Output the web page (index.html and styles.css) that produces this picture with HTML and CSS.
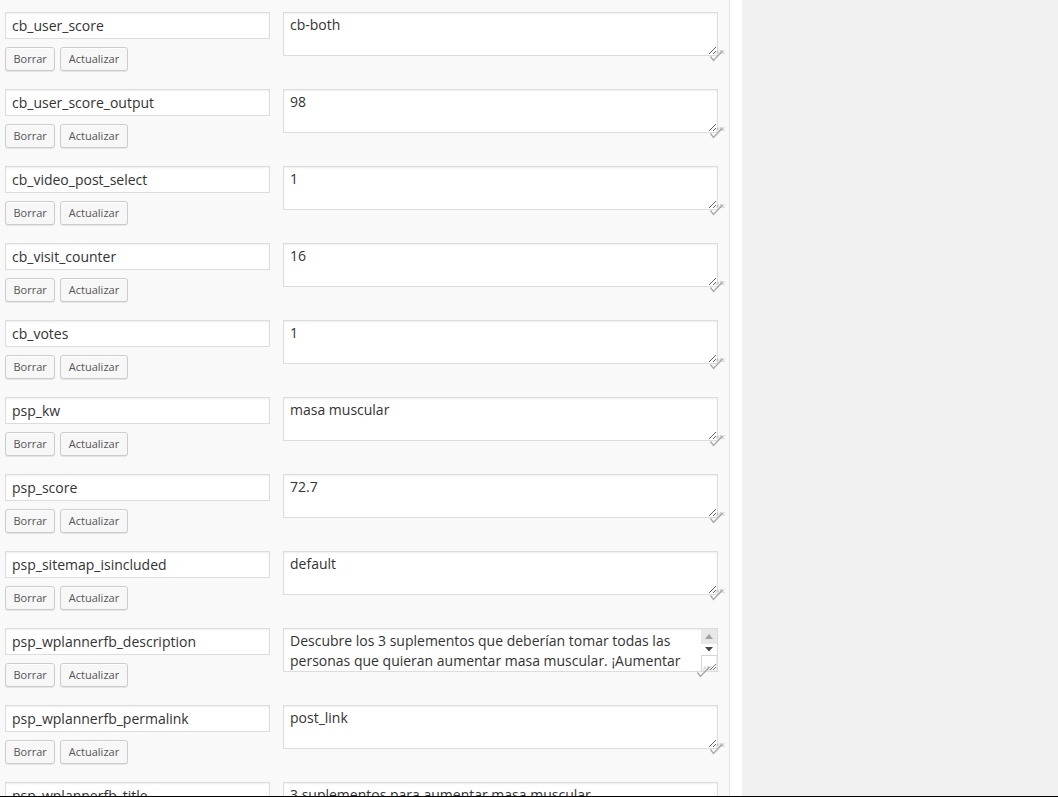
FILE: index.html
```html
<!DOCTYPE html>
<html lang="es">
<head>
<meta charset="utf-8">
<title>Campos personalizados</title>
<link rel="stylesheet" href="styles.css">
</head>
<body>
<div class="layout">
  <div class="panel">
    <div class="row">
      <div class="keycol">
        <input class="key" type="text" value="cb_user_score">
        <div class="btns"><button class="btn">Borrar</button><button class="btn">Actualizar</button></div>
      </div>
      <div class="valcol"><textarea class="val" rows="2">cb-both</textarea><span class="spell"><svg width="16" height="16" viewBox="0 0 16 16"><text x="7" y="7" class="abc">ABC</text><path d="M1.5 9.5 L4.5 13.5 L13.5 4" fill="none" stroke="#a8a8a8" stroke-width="1.3"/></svg></span></div>
    </div>
    <div class="row">
      <div class="keycol">
        <input class="key" type="text" value="cb_user_score_output">
        <div class="btns"><button class="btn">Borrar</button><button class="btn">Actualizar</button></div>
      </div>
      <div class="valcol"><textarea class="val" rows="2">98</textarea><span class="spell"><svg width="16" height="16" viewBox="0 0 16 16"><text x="7" y="7" class="abc">ABC</text><path d="M1.5 9.5 L4.5 13.5 L13.5 4" fill="none" stroke="#a8a8a8" stroke-width="1.3"/></svg></span></div>
    </div>
    <div class="row">
      <div class="keycol">
        <input class="key" type="text" value="cb_video_post_select">
        <div class="btns"><button class="btn">Borrar</button><button class="btn">Actualizar</button></div>
      </div>
      <div class="valcol"><textarea class="val" rows="2">1</textarea><span class="spell"><svg width="16" height="16" viewBox="0 0 16 16"><text x="7" y="7" class="abc">ABC</text><path d="M1.5 9.5 L4.5 13.5 L13.5 4" fill="none" stroke="#a8a8a8" stroke-width="1.3"/></svg></span></div>
    </div>
    <div class="row">
      <div class="keycol">
        <input class="key" type="text" value="cb_visit_counter">
        <div class="btns"><button class="btn">Borrar</button><button class="btn">Actualizar</button></div>
      </div>
      <div class="valcol"><textarea class="val" rows="2">16</textarea><span class="spell"><svg width="16" height="16" viewBox="0 0 16 16"><text x="7" y="7" class="abc">ABC</text><path d="M1.5 9.5 L4.5 13.5 L13.5 4" fill="none" stroke="#a8a8a8" stroke-width="1.3"/></svg></span></div>
    </div>
    <div class="row">
      <div class="keycol">
        <input class="key" type="text" value="cb_votes">
        <div class="btns"><button class="btn">Borrar</button><button class="btn">Actualizar</button></div>
      </div>
      <div class="valcol"><textarea class="val" rows="2">1</textarea><span class="spell"><svg width="16" height="16" viewBox="0 0 16 16"><text x="7" y="7" class="abc">ABC</text><path d="M1.5 9.5 L4.5 13.5 L13.5 4" fill="none" stroke="#a8a8a8" stroke-width="1.3"/></svg></span></div>
    </div>
    <div class="row">
      <div class="keycol">
        <input class="key" type="text" value="psp_kw">
        <div class="btns"><button class="btn">Borrar</button><button class="btn">Actualizar</button></div>
      </div>
      <div class="valcol"><textarea class="val" rows="2">masa muscular</textarea><span class="spell"><svg width="16" height="16" viewBox="0 0 16 16"><text x="7" y="7" class="abc">ABC</text><path d="M1.5 9.5 L4.5 13.5 L13.5 4" fill="none" stroke="#a8a8a8" stroke-width="1.3"/></svg></span></div>
    </div>
    <div class="row">
      <div class="keycol">
        <input class="key" type="text" value="psp_score">
        <div class="btns"><button class="btn">Borrar</button><button class="btn">Actualizar</button></div>
      </div>
      <div class="valcol"><textarea class="val" rows="2">72.7</textarea><span class="spell"><svg width="16" height="16" viewBox="0 0 16 16"><text x="7" y="7" class="abc">ABC</text><path d="M1.5 9.5 L4.5 13.5 L13.5 4" fill="none" stroke="#a8a8a8" stroke-width="1.3"/></svg></span></div>
    </div>
    <div class="row">
      <div class="keycol">
        <input class="key" type="text" value="psp_sitemap_isincluded">
        <div class="btns"><button class="btn">Borrar</button><button class="btn">Actualizar</button></div>
      </div>
      <div class="valcol"><textarea class="val" rows="2">default</textarea><span class="spell"><svg width="16" height="16" viewBox="0 0 16 16"><text x="7" y="7" class="abc">ABC</text><path d="M1.5 9.5 L4.5 13.5 L13.5 4" fill="none" stroke="#a8a8a8" stroke-width="1.3"/></svg></span></div>
    </div>
    <div class="row">
      <div class="keycol">
        <input class="key" type="text" value="psp_wplannerfb_description">
        <div class="btns"><button class="btn">Borrar</button><button class="btn">Actualizar</button></div>
      </div>
      <div class="valcol"><textarea class="val" rows="2">Descubre los 3 suplementos que deberían tomar todas las personas que quieran aumentar masa muscular. ¡Aumentar masa muscular nunca fue tan fácil con estos suplementos!</textarea><span class="vscroll"><svg width="16" height="42" viewBox="0 0 16 42"><rect x="0" y="0" width="16" height="15" fill="#e8e8e8"/><path d="M4 10 L8 5 L12 10 Z" fill="#a3a3a3"/><path d="M4 18 L12 18 L8 22.5 Z" fill="#474747"/><rect x="0.5" y="26.5" width="15.5" height="15.5" fill="#fff" stroke="#d6d6d6"/><path d="M9 41 L15 35 M12 41 L15 38" stroke="#7a7a7a" stroke-width="1"/></svg></span><span class="spell desc"><svg width="16" height="16" viewBox="0 0 16 16"><text x="7" y="7" class="abc">ABC</text><path d="M1.5 9.5 L4.5 13.5 L13.5 4" fill="none" stroke="#a8a8a8" stroke-width="1.3"/></svg></span></div>
    </div>
    <div class="row">
      <div class="keycol">
        <input class="key" type="text" value="psp_wplannerfb_permalink">
        <div class="btns"><button class="btn">Borrar</button><button class="btn">Actualizar</button></div>
      </div>
      <div class="valcol"><textarea class="val" rows="2">post_link</textarea><span class="spell"><svg width="16" height="16" viewBox="0 0 16 16"><text x="7" y="7" class="abc">ABC</text><path d="M1.5 9.5 L4.5 13.5 L13.5 4" fill="none" stroke="#a8a8a8" stroke-width="1.3"/></svg></span></div>
    </div>
    <div class="row">
      <div class="keycol">
        <input class="key" type="text" value="psp_wplannerfb_title">
        <div class="btns"><button class="btn">Borrar</button><button class="btn">Actualizar</button></div>
      </div>
      <div class="valcol"><textarea class="val" rows="2">3 suplementos para aumentar masa muscular</textarea></div>
    </div>
  </div>
  <div class="strip"></div>
  <div class="side"></div>
</div>
<div class="bottomline"></div>
</body>
</html>
```

FILE: styles.css
```css
html, body {
  margin: 0;
  padding: 0;
  height: 100%;
  overflow: hidden;
  background: #f1f1f1;
  font-family: "Open Sans", "Liberation Sans", sans-serif;
}
.layout {
  display: flex;
  align-items: stretch;
  min-height: 100vh;
}
.panel {
  width: 729px;
  flex: 0 0 729px;
  background: #f9f9f9;
  border-right: 1px solid #e5e5e5;
  padding-top: 12px;
  box-sizing: content-box;
}
.strip {
  flex: 0 0 12px;
  background: #fff;
}
.side {
  flex: 1;
  background: #f1f1f1;
}
.row {
  display: flex;
  align-items: flex-start;
  height: 77px;
  padding-left: 5px;
}
.keycol {
  width: 265px;
  display: flex;
  flex-direction: column;
  gap: 8px;
}
.key {
  box-sizing: border-box;
  width: 265px;
  height: 27px;
  margin: 0;
  padding: 2px 6px;
  border: 1px solid #dddddd;
  background: #fff;
  box-shadow: inset 0 1px 2px rgba(0,0,0,0.07);
  font-family: "Open Sans", "Liberation Sans", sans-serif;
  font-size: 14px;
  color: #333;
  outline: none;
}
.btns {
  display: flex;
  gap: 5px;
}
.btn {
  box-sizing: border-box;
  height: 24px;
  margin: 0;
  padding: 0 7.5px 1px;
  border: 1px solid #cccccc;
  border-radius: 3px;
  background: #f7f7f7;
  box-shadow: inset 0 1px 0 #fff, 0 1px 0 rgba(0,0,0,0.08);
  font-family: "Open Sans", "Liberation Sans", sans-serif;
  font-size: 11px;
  color: #555;
  line-height: 20px;
}
.valcol {
  position: relative;
  margin-left: 13px;
}
.val {
  display: block;
  box-sizing: border-box;
  width: 435px;
  height: 44px;
  margin: 0;
  padding: 2px 6px;
  border: 1px solid #dddddd;
  background: #fff;
  box-shadow: inset 0 1px 2px rgba(0,0,0,0.07);
  font-family: "Open Sans", "Liberation Sans", sans-serif;
  font-size: 14px;
  line-height: 20px;
  color: #333;
  resize: both;
  outline: none;
  overflow: hidden;
}
.vscroll {
  position: absolute;
  display: block;
  z-index: 1;
  left: 418px;
  top: 1px;
  width: 16px;
  height: 42px;
  pointer-events: none;
}
.vscroll svg {
  display: block;
}
.spell {
  position: absolute;
  display: block;
  z-index: 2;
  left: 426px;
  top: 35px;
  width: 16px;
  height: 16px;
  pointer-events: none;
}
.spell.desc {
  left: 413px;
}
.spell svg {
  display: block;
}
.abc {
  font-family: "DejaVu Sans", sans-serif;
  font-size: 5px;
  fill: #bdbdbd;
}
.bottomline {
  position: fixed;
  left: 0;
  right: 0;
  bottom: 0;
  height: 1px;
  background: #000;
}
```
